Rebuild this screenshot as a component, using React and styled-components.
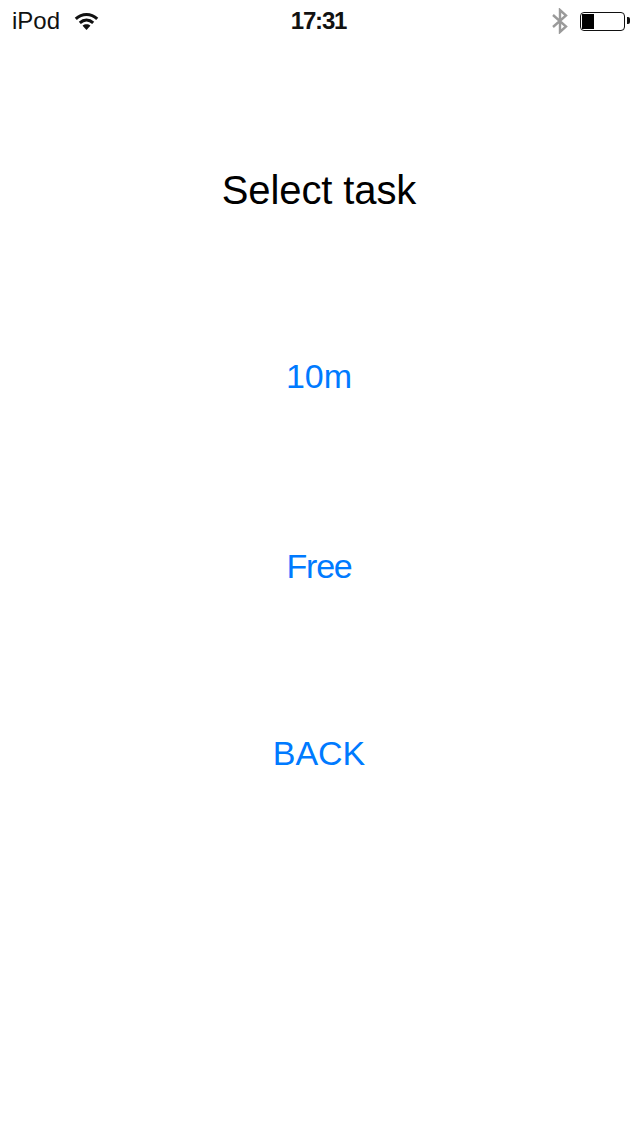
import React from 'react';
import styled, { createGlobalStyle } from 'styled-components';

const Global = createGlobalStyle`
  html, body {
    margin: 0;
    padding: 0;
    background: #fff;
    font-family: "Liberation Sans", Arial, sans-serif;
  }
`;

const Screen = styled.main`
  width: 640px;
  height: 1136px;
  background: #fff;
  overflow: hidden;
`;

const StatusBar = styled.header`
  height: 42px;
  display: grid;
  grid-template-columns: 1fr auto 1fr;
  align-items: center;
  padding: 0 15px 0 12px;
  box-sizing: border-box;
  font-size: 24px;
  color: #111;
`;

const StatusLeft = styled.div`
  display: flex;
  align-items: center;
  gap: 14px;
`;

const Clock = styled.div`
  font-weight: 700;
  letter-spacing: -1.2px;
`;

const StatusRight = styled.div`
  display: flex;
  align-items: center;
  justify-content: flex-end;
  gap: 11px;
`;

const Battery = styled.div`
  position: relative;
  width: 45px;
  height: 19px;
  box-sizing: border-box;
  border: 1.5px solid #111;
  border-radius: 4px;
  padding: 1px;

  &::before {
    content: '';
    display: block;
    width: 12px;
    height: 100%;
    background: #000;
  }

  &::after {
    content: '';
    position: absolute;
    right: -6px;
    top: 4px;
    width: 3px;
    height: 7px;
    background: #111;
    border-radius: 0 2px 2px 0;
  }
`;

const Content = styled.section`
  padding-right: 2px;
`;

const Title = styled.h1`
  margin: 125px 0 0;
  text-align: center;
  font-size: 40px;
  line-height: 46px;
  font-weight: 400;
  letter-spacing: -0.1px;
  color: #000;
`;

const Menu = styled.nav`
  display: flex;
  flex-direction: column;
  align-items: center;
`;

const MenuButton = styled.button`
  margin-top: ${({ $gap }) => $gap}px;
  padding: 0;
  border: 0;
  background: none;
  font-family: inherit;
  font-size: 34px;
  line-height: 40px;
  letter-spacing: ${({ $tracking }) => $tracking || 0}px;
  color: #007aff;
`;

const Wifi = () => (
  <svg width="25" height="18" viewBox="0 0 28 20" fill="none" stroke="#111" strokeWidth="3.4">
    <path d="M2 7.5C9 1 19 1 26 7.5" />
    <path d="M6.5 12C11 8 17 8 21.5 12" />
    <path d="M14 20L9.6 15.4C12 13.2 16 13.2 18.4 15.4Z" fill="#111" stroke="none" />
  </svg>
);

const Bluetooth = () => (
  <svg width="18" height="26" viewBox="0 0 18 26" fill="none" stroke="#9a9a9a" strokeWidth="2.4">
    <path d="M2 7L15 18.5L9 24V2L15 7.5L2 19" />
  </svg>
);

export default function App() {
  return (
    <Screen>
      <Global />
      <StatusBar>
        <StatusLeft>
          <span>iPod</span>
          <Wifi />
        </StatusLeft>
        <Clock>17:31</Clock>
        <StatusRight>
          <Bluetooth />
          <Battery />
        </StatusRight>
      </StatusBar>
      <Content>
        <Title>Select task</Title>
        <Menu>
          <MenuButton $gap={143}>10m</MenuButton>
          <MenuButton $gap={150} $tracking={-1.2}>Free</MenuButton>
          <MenuButton $gap={147}>BACK</MenuButton>
        </Menu>
      </Content>
    </Screen>
  );
}
